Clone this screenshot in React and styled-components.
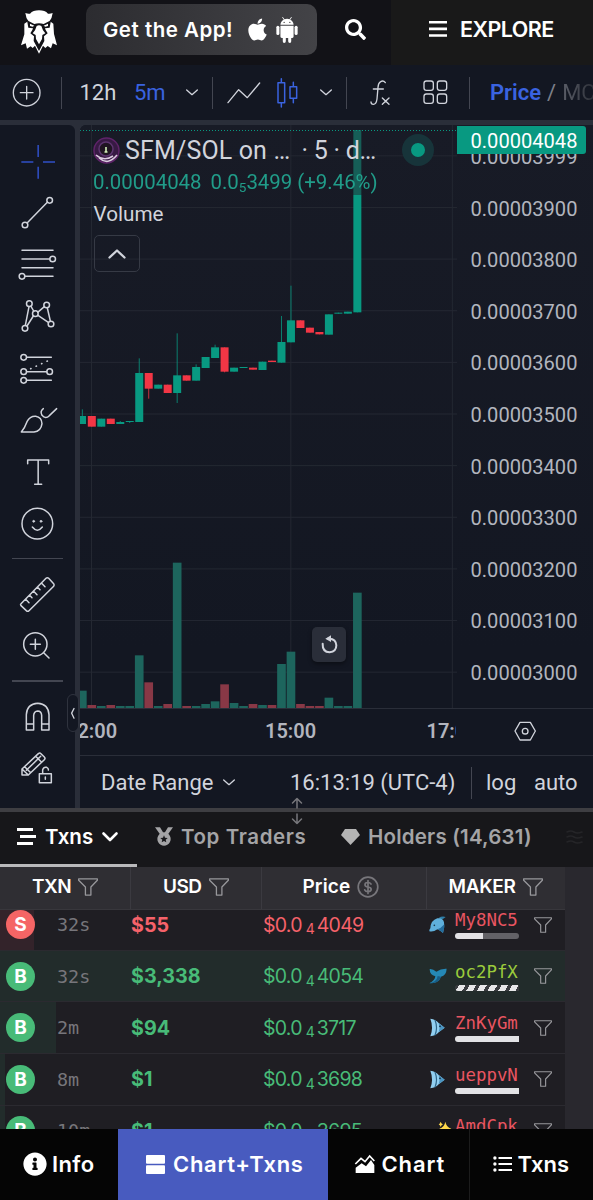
import React from 'react';
import styled, { createGlobalStyle } from 'styled-components';
import { FaApple, FaSearch, FaInfoCircle } from 'react-icons/fa';

const GlobalStyle = createGlobalStyle`
  * { box-sizing: border-box; }
  body { margin: 0; background: #121217; }
`;

const ui = 'Inter, "Open Sans", sans-serif';
const chartFont = 'Roboto, "Noto Sans", sans-serif';
const green = '#089981';
const red = '#f23645';

const Page = styled.div`
  width: 593px;
  height: 1200px;
  overflow: hidden;
  display: flex;
  flex-direction: column;
  font-family: ${ui};
  color: #fff;
  white-space: nowrap;
`;

const Svg = styled.svg`
  display: block;
  flex: none;
  overflow: visible;
`;

/* ---------- top bar ---------- */

const TopBar = styled.header`
  display: flex;
  height: 65px;
  flex: none;
  background: #121217;
`;

const Brand = styled.div`
  width: 86px;
  padding: 10px 0 0 21px;
`;

const AppButton = styled.div`
  display: flex;
  align-items: center;
  width: 231px;
  height: 51px;
  margin-top: 4px;
  padding-left: 17px;
  border-radius: 10px;
  background: linear-gradient(90deg, #2c2c30, #434347);
  font-size: 20.5px;
  font-weight: 600;
  letter-spacing: 0.5px;

  span { width: 142px; }
`;

const SearchBox = styled.div`
  display: flex;
  width: 74px;
  padding: 19px 0 0 28px;
`;

const Explore = styled.div`
  display: flex;
  flex: 1;
  align-items: center;
  gap: 13px;
  padding: 0 0 7px 38px;
  background: #191919;
  font-size: 21.5px;
  font-weight: 600;
  letter-spacing: -0.55px;
`;

/* ---------- chart toolbar ---------- */

const ToolBar = styled.div`
  display: flex;
  align-items: center;
  height: 55px;
  flex: none;
  background: #131722;
  font-family: ${chartFont};
  font-size: 22px;
  color: #d1d4dc;
`;

const BarItem = styled.div`
  width: ${(p) => p.$w}px;
  flex: none;
  padding-left: ${(p) => p.$pl || 0}px;
  color: ${(p) => p.$color || 'inherit'};
`;

const Rule = styled.div`
  width: 1px;
  height: 32px;
  flex: none;
  background: #434651;
`;

const PriceSwitch = styled.div`
  display: flex;
  gap: 6px;
  margin-left: 20px;
  overflow: hidden;
  color: #7d808a;

  b { color: #3a63e0; font-weight: 600; }
  span { background: linear-gradient(90deg, #5b5e68, #24272f 38px); background-clip: text; color: transparent; }
`;

/* ---------- chart ---------- */

const ChartArea = styled.section`
  display: flex;
  gap: 5px;
  height: 688px;
  padding-top: 5px;
  flex: none;
  background: #2a2e39;
`;

const DrawRail = styled.div`
  position: relative;
  width: 75px;
  flex: none;
  padding-top: 10px;
  border-top-right-radius: 6px;
  background: #131722;
`;

const RailTool = styled.div`
  display: flex;
  align-items: center;
  height: 51.7px;
  padding-left: 18.3px;
`;

const RailRule = styled.div`
  height: 19.5px;
  padding: 9px 12px 0;

  &::after { content: ''; display: block; height: 1.5px; background: #434651; }
`;

const RailHandle = styled.div`
  position: absolute;
  left: 67px;
  top: 569px;
  z-index: 3;
  display: flex;
  align-items: center;
  justify-content: center;
  width: 12px;
  height: 38px;
  border: 1px solid #2f333e;
  border-radius: 6px;
  background: #131722;
`;

const ChartPane = styled.div`
  flex: 1;
  border-top-left-radius: 6px;
  overflow: hidden;
  background: #131722;
`;

const PlotRow = styled.div`
  display: flex;
  height: 584px;
  border-bottom: 1px solid #2a2e39;
  background: linear-gradient(#181b26, #131722 90%);
`;

const Plot = styled.div`
  position: relative;
  width: 377px;
  height: 583px;
  flex: none;
`;

const Legend = styled.div`
  position: absolute;
  left: 13px;
  top: 9px;
  width: 350px;
  font-family: ${chartFont};
  color: #d1d4dc;
`;

const Pair = styled.div`
  display: flex;
  align-items: center;
  height: 32px;
  font-size: 25px;

  svg { margin-right: 5px; }
`;

const PairName = styled.span`
  width: ${(p) => p.$w}px;
  letter-spacing: ${(p) => p.$ls || 0}px;
`;

const Change = styled.div`
  display: flex;
  height: 32px;
  align-items: center;
  font-size: 20.4px;
  color: #22ab94;
  opacity: 0.9;

  span { width: 117.5px; }
  small { font-size: 13.5px; line-height: 1; margin-top: 11px; }
`;

const VolumeLabel = styled.div`
  height: 32px;
  line-height: 32px;
  padding-left: 0.5px;
  font-size: 20.7px;
`;

const Collapse = styled.div`
  display: flex;
  align-items: center;
  justify-content: center;
  width: 46px;
  height: 37px;
  margin: 5px 0 0 1px;
  border: 1px solid #363a45;
  border-radius: 5px;
`;

const LiveDot = styled.div`
  position: absolute;
  left: 322px;
  top: 9px;
  width: 32px;
  height: 32px;
  border: 9px solid #17343a;
  border-radius: 50%;
  background: ${green};
`;

const ResetButton = styled.div`
  position: absolute;
  left: 232px;
  top: 502px;
  display: flex;
  align-items: center;
  justify-content: center;
  width: 34px;
  height: 35px;
  border-radius: 5px;
  background: #2a2e39;
  box-shadow: 0 2px 4px rgba(0, 0, 0, 0.4);
`;

const PriceAxis = styled.div`
  position: relative;
  flex: 1;
  padding-top: 7px;
  font-family: ${chartFont};
  font-size: 20.1px;
  color: #b2b5be;
`;

const AxisPrice = styled.div`
  height: 51.6px;
  line-height: 51.6px;
  padding-left: 13.5px;
`;

const LastPrice = styled.div`
  position: absolute;
  left: 0;
  top: 1px;
  width: 129px;
  height: 28px;
  padding-left: 13.5px;
  border-radius: 0 3px 3px 0;
  line-height: 30px;
  background: ${green};
  color: #fff;
`;

const TimeAxis = styled.div`
  display: flex;
  height: 47px;
  border-bottom: 1px solid #2a2e39;
  font-family: ${chartFont};
  font-size: 20px;
  font-weight: 600;
  line-height: 44px;
  color: #b2b5be;
`;

const TimeLabels = styled.div`
  display: flex;
  width: 376px;
  flex: none;
  overflow: hidden;
`;

const TimeLabel = styled.span`
  width: ${(p) => p.$w}px;
  margin-left: ${(p) => p.$ml || 0}px;
  flex: none;
`;

const AxisSettings = styled.div`
  padding: 12px 0 0 58px;
`;

const RangeBar = styled.div`
  display: flex;
  align-items: center;
  height: 53px;
  padding-left: 21px;
  font-family: ${chartFont};
  font-size: 22px;
  color: #d1d4dc;
`;

const Splitter = styled.div`
  position: relative;
  height: 4px;
  flex: none;
  background: #3e3e42;
`;

const SplitArrows = styled.div`
  position: absolute;
  left: 290.5px;
  top: -11.5px;
  z-index: 4;
`;

/* ---------- transactions ---------- */

const Tabs = styled.nav`
  display: flex;
  height: 55px;
  flex: none;
  background: #17171a;
  font-size: 20.5px;
  font-weight: 600;
  color: #a4a4a6;
`;

const Tab = styled.div`
  display: flex;
  align-items: center;
  gap: ${(p) => p.$gap}px;
  width: ${(p) => p.$w}px;
  flex: none;
  padding: 0 0 ${(p) => (p.$active ? 3 : 6)}px ${(p) => p.$pl}px;
  border-bottom: ${(p) => (p.$active ? '3px solid #b9b9bb' : '0')};
  color: ${(p) => (p.$active ? '#fff' : 'inherit')};
  letter-spacing: ${(p) => p.$ls || 0}px;
`;

const TableArea = styled.div`
  height: 262px;
  flex: none;
  overflow: hidden;
  background: #29282e;
`;

const TableHead = styled.div`
  position: relative;
  z-index: 1;
  display: flex;
  width: 564.5px;
  height: 42.5px;
  background: #2f2e33;
  border-bottom: 1px solid #38373c;
  font-size: 19px;
  font-weight: 600;
`;

const HeadCell = styled.div`
  display: flex;
  align-items: center;
  gap: 7px;
  width: ${(p) => p.$w}px;
  padding: 0 0 2px ${(p) => p.$pl}px;
  border-right: ${(p) => (p.$last ? '0' : '1px solid #3b3a40')};
  letter-spacing: ${(p) => p.$ls || 0}px;
`;

const Rows = styled.div`
  width: 564.5px;
  margin-top: -10.3px;
`;

const Row = styled.div`
  display: flex;
  align-items: center;
  height: 51.6px;
  padding-left: 6px;
  border-bottom: 1px solid #2b2a30;
  background: linear-gradient(90deg, ${(p) => (p.$side === 'S' ? '#33232a' : '#222c2b')} ${(p) => p.$fill}px, #1f1e23 ${(p) => p.$fill}px);
  color: ${(p) => (p.$side === 'S' ? '#f6626a' : '#48bb78')};
`;

const Side = styled.div`
  display: flex;
  align-items: center;
  justify-content: center;
  width: 29px;
  height: 29px;
  border-radius: 50%;
  background: ${(p) => (p.$side === 'S' ? '#f56565' : '#48bb78')};
  color: #fff;
  font-size: 19px;
  font-weight: 700;
`;

const Age = styled.div`
  width: 96px;
  padding-left: 22px;
  font-family: "DejaVu Sans Mono", monospace;
  font-size: 18.4px;
  color: #77767b;
`;

const Usd = styled.div`
  width: 132px;
  font-size: 19.7px;
  font-weight: 700;
`;

const Price = styled.div`
  display: flex;
  align-items: center;
  width: 166px;
  font-size: 19.5px;
  letter-spacing: -0.75px;

  small { width: 15px; padding: 9px 0 0 4px; font-size: 14px; line-height: 1; }
`;

const Creature = styled.div`
  width: 26px;
  flex: none;
`;

const Maker = styled.div`
  width: 79px;
  flex: none;
`;

const MakerName = styled.div`
  height: 23px;
  line-height: 21px;
  font-family: "DejaVu Sans Mono", monospace;
  font-size: 17.4px;
  color: ${(p) => (p.$lime ? '#9bcb3c' : '#e95561')};
`;

const Hold = styled.div`
  width: 63.5px;
  height: 6px;
  background: ${(p) =>
    p.$kind === 'striped'
      ? 'repeating-linear-gradient(120deg, #3a3c40 0 3.5px, #e8e8ea 3.5px 9.2px)'
      : `linear-gradient(90deg, #e2e2e5 ${p.$kind === 'half' ? 28 : 64}px, #636267 0)`};
  border-radius: ${(p) => (p.$kind === 'half' ? '3px' : '3px 0 0 3px')};
`;

/* ---------- bottom navigation ---------- */

const BottomNav = styled.nav`
  position: relative;
  z-index: 2;
  display: flex;
  flex: 1;
  background: #050505;
  font-size: 22px;
  font-weight: 600;
`;

const NavItem = styled.div`
  display: flex;
  align-items: center;
  gap: ${(p) => p.$gap}px;
  width: ${(p) => p.$w}px;
  flex: none;
  padding: 0 0 1px ${(p) => p.$pl}px;
  background: ${(p) => (p.$active ? '#485bbf' : 'transparent')};
  border-right: ${(p) => (p.$line ? '1px solid #1c1c1c' : '0')};
  letter-spacing: ${(p) => p.$ls || 0}px;
`;

/* ---------- icons ---------- */

const Eagle = () => (
  <Svg width="36" height="44" viewBox="64 31 108 132">
    <path fill="#fff" d="M77 40 Q84 43 91 42 Q100 32 118 32 Q136 32 145 42 Q152 43 159 40 Q157 56 150 64 L161 72 L163 103 L172 137 L159 131 L154 146 L144 139 L137 145 L130 138 L118 162 L106 138 L99 145 L93 140 L82 147 L78 131 L64 137 L74 104 L74 72 L86 64 Q79 56 77 40Z" />
    <path fill="#121217" d="M82 62 L104 73 Q118 68 132 73 L154 62 L150 84 L136 86 L138 91 L144 101 L133 110 L134 124 L118 154 L102 124 L103 110 L92 101 L98 91 L100 86 L86 84Z" />
    <path fill="#fff" d="M91 72 L104 78 L99 81 L91 79Z M145 72 L132 78 L137 81 L145 79Z M111 79 Q118 75 125 79 L130 92 L137 101 L128 106 L127 118 L118 134 L109 118 L108 106 L99 101 L106 92Z" />
  </Svg>
);

const Android = () => (
  <Svg width="22" height="26" viewBox="828 50 65 77" fill="#fff">
    <path d="M841 73 Q842 62 851 58 L846 51 L848 50 L853 57 Q861 54 868 57 L873 50 L875 51 L870 58 Q879 62 880 73Z" />
    <path d="M841 76 H880 V108 Q880 112 876 112 H873 V122 Q873 127 869 127 Q864 127 864 122 V112 H857 V122 Q857 127 852 127 Q848 127 848 122 V112 H845 Q841 112 841 108Z" />
    <rect x="829" y="76" width="9" height="27" rx="4.5" />
    <rect x="883" y="76" width="9" height="27" rx="4.5" />
    <circle cx="852" cy="66" r="1.8" fill="#333" />
    <circle cx="869" cy="66" r="1.8" fill="#333" />
  </Svg>
);

const Line = ({ w, h, box, d, color = '#d1d4dc', sw = 4, children }) => (
  <Svg width={w} height={h} viewBox={box} fill="none" stroke={color} strokeWidth={sw} strokeLinecap="round" strokeLinejoin="round">
    <path d={d} />
    {children}
  </Svg>
);

const Caret = () => <Line w={12} h={7} box="558 268 36 21" d="M560 271 L576 285 L592 271" />;

const Funnel = ({ w = 20, h = 18 }) => (
  <Line w={w} h={h} box="229 233 62 54" color="#98989c" sw={4} d="M231 235 H289 V239 L269 260 V285 H252 V260 L231 239Z" />
);

const Rail = ({ box, d, color, children, butt }) => (
  <RailTool>
    <Svg width="40" height="40" viewBox={`55 ${box} 120 120`} fill="none" stroke={color || '#d1d4dc'} strokeWidth="4.5" strokeLinejoin="round" strokeLinecap={butt ? 'butt' : 'round'}>
      <path d={d} />
      {children}
    </Svg>
  </RailTool>
);

const rings = (list, r = 8.5) => list.map(([x, y]) => <circle key={`${x}-${y}`} cx={x} cy={y} r={r} />);

const Dolphin = () => (
  <Svg width="17" height="18" viewBox="412 47 51 54">
    <path fill="#2f7fa8" d="M441 53 Q451 46 462 50 Q456 57 446 58Z" />
    <path fill="#5fb0dc" d="M413 93 Q412 89 416 84 Q417 60 437 54 Q454 52 457 66 Q460 80 454 98 Q446 90 437 87 Q425 96 413 93Z" />
    <path fill="#246d9d" d="M437 87 Q446 90 454 98 Q458 88 458 72 Q448 84 437 87Z" />
    <circle cx="428" cy="75" r="2.5" fill="#18374c" />
  </Svg>
);

const Whale = () => (
  <Svg width="18" height="16" viewBox="410 205 54 48">
    <path fill="#2588b5" d="M412 208 Q422 207 432 216 Q446 206 463 207 Q462 227 446 231 Q440 251 411 251 Q428 242 429 230 Q412 226 412 208Z" />
    <path fill="#185d86" d="M446 231 Q440 251 411 251 Q434 246 436 229Z" />
  </Svg>
);

const Fish = () => (
  <Svg width="17" height="19" viewBox="413 355 51 57">
    <path fill="#91cff0" d="M417 357 Q434 359 442 370 L460 384 L442 398 Q434 408 417 410 Q427 383 417 357Z" />
    <path fill="none" stroke="#2d6487" strokeWidth="3.5" d="M431 361 Q440 384 431 407" />
    <path fill="#4b95c2" d="M442 370 L460 384 L442 398 Q447 384 442 370Z" />
    <circle cx="446" cy="380" r="2.8" fill="#17344a" />
  </Svg>
);

const Sparkles = () => (
  <Svg width="22" height="20" viewBox="413 643 66 60">
    <path fill="none" stroke="#38a169" strokeWidth="4" d="M416 690 Q418 676 426 678 Q434 679 434 690 M440 690 Q440 678 448 679" />
    <path fill="#ffd94a" d="M462 645 Q465 662 480 666 Q466 670 462 687 Q458 670 444 666 Q459 662 462 645Z M438 666 Q441 675 449 678 Q441 681 438 690 Q436 681 428 678 Q436 675 438 666Z M448 645 Q450 651 455 653 Q450 655 448 661 Q446 655 442 653 Q446 651 448 645Z" />
  </Svg>
);

/* ---------- chart data: [up, top, bottom, high, low, volume top] ---------- */

const candles = [
  [1, 888, 912, 868, 912, 452], [0, 888, 920, 888, 920, 495], [1, 896, 920, 896, 920, 498],
  [0, 896, 912, 896, 912, 495], [1, 906, 912, 903, 912, 498], [1, 903, 906, 903, 909, 498],
  [1, 759, 906, 715, 906, 346], [0, 759, 806, 759, 836, 427], [1, 794, 806, 794, 806, 498],
  [0, 794, 819, 794, 819, 492], [1, 766, 819, 640, 849, 68], [0, 766, 782, 766, 782, 498],
  [1, 741, 782, 733, 782, 498], [1, 711, 744, 711, 744, 492], [1, 682, 714, 674, 714, 484],
  [0, 682, 755, 682, 757, 433], [1, 743, 755, 743, 755, 489], [1, 741, 744, 741, 744, 498],
  [0, 743, 749, 743, 749, 492], [1, 725, 750, 725, 750, 495], [0, 722, 726, 722, 726, 495],
  [1, 666, 728, 588, 728, 372], [1, 601, 667, 497, 667, 335], [0, 601, 624, 601, 624, 492],
  [0, 623, 638, 623, 638, 498], [0, 636, 643, 636, 643, 498], [1, 583, 644, 583, 644, 473],
  [1, 578, 581, 578, 581, 498], [1, 575, 581, 575, 581, 498], [1, 225, 577, 225, 577, 158],
];

const CandleChart = () => (
  <Svg width="377" height="583" viewBox="0 15 1131 1749">
    <g stroke="#242832" strokeWidth="3">
      {Array.from({ length: 11 }, (_, i) => (
        <line key={i} x1="0" x2="1131" y1={107.5 + i * 154.9} y2={107.5 + i * 154.9} />
      ))}
      {[34.5, 632.5, 1117].map((x) => <line key={x} x1={x} x2={x} y1="15" y2="1764" />)}
    </g>
    {candles.map(([up, top, bottom, high, low, vol], i) => {
      const x = 7 + i * 28.45;
      const left = Math.max(0, x - 12);
      return (
        <g key={i}>
          <rect x={Math.max(0, x - 13)} y={vol + 1260} width={i ? 26 : 20} height={504 - vol} fill={up ? '#1d655d' : '#883846'} />
          <rect x={x - 1.5} y={high} width="3" height={low - high} fill={up ? green : red} opacity="0.8" />
          <rect x={left} y={top} width={i ? 24 : 18} height={bottom - top} fill={up ? green : red} />
        </g>
      );
    })}
    <rect x="820" y="30" width="24" height="195" fill="#165e57" />
    <line x1="0" x2="1131" y1="31.5" y2="31.5" stroke={green} strokeWidth="3" strokeDasharray="3 6" />
  </Svg>
);

const axisPrices = ['3999', '3900', '3800', '3700', '3600', '3500', '3400', '3300', '3200', '3100', '3000'];

const txns = [
  { side: 'S', age: '32s', usd: '$55', price: '4049', maker: 'My8NC5', kind: 'half', fill: 34, Animal: Dolphin },
  { side: 'B', age: '32s', usd: '$3,338', price: '4054', maker: 'oc2PfX', kind: 'striped', fill: 565, Animal: Whale },
  { side: 'B', age: '2m', usd: '$94', price: '3717', maker: 'ZnKyGm', kind: 'full', fill: 56.5, Animal: Fish },
  { side: 'B', age: '8m', usd: '$1', price: '3698', maker: 'ueppvN', kind: 'full', fill: 5.5, Animal: Fish },
  { side: 'B', age: '10m', usd: '$1', price: '3695', maker: 'AmdCpk', kind: 'full', fill: 5.5, Animal: Sparkles },
];

export default function App() {
  return (
    <Page>
      <GlobalStyle />
      <TopBar>
        <Brand><Eagle /></Brand>
        <AppButton>
          <span>Get the App!</span>
          <FaApple size={25} />
          <BarItem $w={29} $pl={6}><Android /></BarItem>
        </AppButton>
        <SearchBox><FaSearch size={21} /></SearchBox>
        <Explore>
          <Svg width="18" height="16" viewBox="0 0 18 16" fill="#fff">
            <path d="M0 0h18v2.6H0zM0 6.6h18v2.6H0zM0 13.2h18v2.6H0z" />
          </Svg>
          EXPLORE
        </Explore>
      </TopBar>

      <ToolBar>
        <BarItem $w={61} $pl={12}>
          <Line w={29} h={29} box="36 236 87 87" d="M61 280 H99 M80 261 V299"><circle cx="80" cy="280" r="40" /></Line>
        </BarItem>
        <Rule />
        <BarItem $w={72} $pl={17.5}>12h</BarItem>
        <BarItem $w={52}  $color="#3a63e0">5m</BarItem>
        <BarItem $w={26}><Caret /></BarItem>
        <Rule />
        <BarItem $w={63} $pl={14}>
          <Line w={34} h={22} box="681 245 102 66" d="M684 307 L716 268 L742 292 L779 248" />
        </BarItem>
        <BarItem $w={44} $pl={1}>
          <Line w={22} h={30} box="831 234 66 90" color="#3a63e0" sw={4.5} d="M844 236 V248 M844 308 V321 M834 248 H854 V308 H834Z M880 247 V260 M880 295 V308 M870 260 H890 V295 H870Z" />
        </BarItem>
        <BarItem $w={26}><Caret /></BarItem>
        <Rule />
        <BarItem $w={76} $pl={23}>
          <Line w={21} h={26} box="231 238 63 78" d="M277 246 Q271 238 263 243 Q256 247 255 260 L252 295 Q250 311 241 311 Q234 311 234 304 M241 265 H271 M268 292 L288 311 M288 292 L268 311" />
        </BarItem>
        <BarItem $w={46}>
          <Line w={25} h={25} box="390 241 75 75" d="">
            {[[393, 244], [433, 244], [393, 283], [433, 283]].map(([x, y]) => <rect key={`${x}${y}`} x={x} y={y} width="28" height="28" rx="7" />)}
          </Line>
        </BarItem>
        <Rule />
        <PriceSwitch><b>Price</b> / <span>MCap</span></PriceSwitch>
      </ToolBar>

      <ChartArea>
        <DrawRail>
          <Rail box={61} color="#3050c8" butt d="M65 124 H101 M130 124 H166 M115.500 73 V109 M115.500 138 V174" />
          <Rail box={218} d="M83 307 L143 246">{rings([[76, 314], [150, 240]])}</Rail>
          <Rail box={373} d="M67 392 H160 M67 418 H150 M67 444 H160 M77 470 H160">{rings([[159, 418], [67, 470]])}</Rail>
          <Rail box={528} d="M88 560 L77 616 M94 559 L102 573 M101 588 L82 618 M114 577 L134 560 M115 586 L146 607 M143 564 L152 603">{rings([[89, 551], [141, 555], [107, 581], [76, 625], [154, 612]])}</Rail>
          <Rail box={684} d="M81 712 H155 M81 755 H141 M81 781 H155">
            {rings([[72, 712], [72, 755], [150, 755], [72, 781]])}
            <path d="M93 746 L150 720" strokeDasharray="1 17" strokeWidth="5" />
          </Rail>
          <Rail box={838} d="M65 937 Q76 923 82 906 Q91 889 108 890 Q126 893 127 912 Q124 935 103 937Z M131 867 Q120 875 127 887 Q138 900 149 888 L171 867" />
          <Rail box={993} d="M84 1031 V1020 H147 V1031 M115.500 1020 V1093 M105 1093 H126" />
          <Rail box={1149} d="M98 1221 Q113 1240 128 1221">
            <circle cx="113" cy="1211" r="46" />
            <circle cx="102" cy="1204" r="3" fill="#d1d4dc" strokeWidth="2" />
            <circle cx="124" cy="1204" r="3" fill="#d1d4dc" strokeWidth="2" />
          </Rail>
          <RailRule />
          <Rail box={341} d="M64 430 L139 354 Q143 350 147 354 L162 370 Q165 374 162 378 L88 451 Q84 455 80 451 L64 436 Q61 433 64 430Z M78 417 L88 427 M90 405 L97 412 M102 393 L112 403 M114 381 L121 388 M126 369 L136 379" />
          <Rail box={496} d="M92 551 H122 M107 536 V566 M132 576 L148 592"><circle cx="107" cy="551" r="35" /></Rail>
          <RailRule />
          <Rail box={709} d="M80 808 V762 Q82 730 114 728 Q146 730 148 762 V808 H126 V764 Q125 751 114 751 Q103 752 102 764 V808Z M80 790 H102 M126 790 H148" />
          <Rail box={863} d="M67 944 V926 L116 880 Q120 876 124 880 L134 890 Q138 894 134 898 L86 944Z M67 926 L86 944 M75 919 L93 937 M80 930 L123 888 M108 888 L126 906 M119 940 H155 V967 H119Z M129 940 V928 Q132 919 141 921 Q147 924 146 929 M137 950 V957" />
          <RailHandle><Line w={4} h={11} box="214 745 12 32" sw={4} d="M223 746 L216 760 L223 775" /></RailHandle>
        </DrawRail>

        <ChartPane>
          <PlotRow>
            <Plot>
              <CandleChart />
              <Legend>
                <Pair>
                  <Svg width="27" height="27" viewBox="0 0 27 27">
                    <circle cx="13.500" cy="13.500" r="12.500" fill="#371a43" stroke="#5f2369" strokeWidth="1.500" />
                    <circle cx="13" cy="12" r="7" fill="#201522" stroke="#5d3570" strokeWidth="1.500" />
                    <path d="M3 18 Q11 25 20 19 M6 21 Q15 29 24 18" fill="none" stroke="#dac9df" strokeWidth="1.600" />
                    <path d="M13 10 V15 M11.500 15 H14.500" stroke="#d4f1ba" strokeWidth="1.600" />
                  </Svg>
                  <PairName $w={176.5} $ls={0.15}>SFM/SOL on …</PairName>
                  <PairName $ls={-0.25}>· 5 · d…</PairName>
                </Pair>
                <Change><span>0.00004048</span>0.0<small>5</small>3499 (+9.46%)</Change>
                <VolumeLabel>Volume</VolumeLabel>
                <Collapse><Line w={18} h={10} box="0 0 18 10" sw={2.3} d="M1.500 8.500 L9 1.500 L16.500 8.500" /></Collapse>
              </Legend>
              <LiveDot />
              <ResetButton>
                <Line w={17} h={18} box="722 290 51 54" sw={6} d="M727 313 Q726 338 748 339 Q768 337 768 318 Q767 299 747 298 H742"><path fill="#d1d4dc" stroke="none" d="M735 298 L752 288 V308Z" /></Line>
              </ResetButton>
            </Plot>
            <PriceAxis>
              {axisPrices.map((p) => <AxisPrice key={p}>0.0000{p}</AxisPrice>)}
              <LastPrice>0.00004048</LastPrice>
            </PriceAxis>
          </PlotRow>
          <TimeAxis>
            <TimeLabels>
              <TimeLabel $w={199} $ml={-14}>12:00</TimeLabel>
              <TimeLabel $w={161.5}>15:00</TimeLabel>
              <TimeLabel $w={60}>17:00</TimeLabel>
            </TimeLabels>
            <AxisSettings>
              <Line w={23} h={22} box="664 95 69 66" d="M682 99 H713 L728 125 L713 152 H682 L667 125Z"><circle cx="697.500" cy="125.500" r="8.500" /></Line>
            </AxisSettings>
          </TimeAxis>
          <RangeBar>
            <BarItem $w={122}>Date Range</BarItem>
            <BarItem $w={67}><Caret /></BarItem>
            <BarItem $w={181}>16:13:19 (UTC-4)</BarItem>
            <Rule />
            <BarItem $w={62} $pl={14}>log</BarItem>
            <BarItem $w={45}>auto</BarItem>
          </RangeBar>
        </ChartPane>
      </ChartArea>

      <Splitter>
        <SplitArrows>
          <Line w={12} h={28} box="0 0 12 28" color="#77777c" sw={1.5} d="M6 11 V1.500 M1.500 6 L6 1.500 L10.500 6 M6 17 V26.500 M1.500 22 L6 26.500 L10.500 22" />
        </SplitArrows>
      </Splitter>

      <Tabs>
        <Tab $active $w={137} $pl={17} $gap={9}>
          <Svg width="19" height="17" viewBox="0 0 19 17" fill="#fff"><path d="M0 0h16v3H0zM3 7h16v3H3zM0 14h16v3H0z" /></Svg>
          Txns
          <Line w={16} h={10} box="0 0 16 10" color="#fff" sw={2.6} d="M1.500 1.500 L8 8 L14.500 1.500" />
        </Tab>
        <Tab $w={204} $pl={17.5} $gap={8.5} $ls={0.6}>
          <Svg width="18" height="19" viewBox="464 83 54 57" fill="#a4a4a6">
            <path d="M464 84 H479 L489 100 L480 106Z M518 84 H503 L493 100 L502 106Z" />
            <path fillRule="evenodd" d="M491 99 A20 20 0 1 0 491.100 99Z M491 108 L494 115 L502 116 L496 121 L498 129 L491 125 L484 129 L486 121 L480 116 L488 115Z" />
          </Svg>
          Top Traders
        </Tab>
        <Tab $w={225} $pl={0} $gap={8} $ls={0.2}>
          <Svg width="19" height="16" viewBox="0 0 19 16" fill="#b4b4b4"><path d="M4 0 H15 L19 6 L9.500 16 L0 6Z" /></Svg>
          Holders (14,631)
        </Tab>
        <Tab $w={20} $pl={0} $gap={0}>
          <Line w={17} h={14} box="0 0 17 14" color="#252528" sw={1.6} d="M1 2 Q5 0 8 2 T16 2 M1 7 Q5 5 8 7 T16 7 M1 12 Q5 10 8 12 T16 12" />
        </Tab>
      </Tabs>

      <TableArea>
        <TableHead>
          <HeadCell $w={131} $pl={32} $ls={-0.5}>TXN <Funnel /></HeadCell>
          <HeadCell $w={131} $pl={32} $ls={-0.5}>USD <Funnel /></HeadCell>
          <HeadCell $w={164.5} $pl={40.5} $ls={0.1}>
            Price
            <Line w={22} h={22} box="0 0 22 22" color="#77767b" sw={1.7} d="M14 8 Q13 6.500 11 6.500 Q8 6.500 8 8.700 Q8 10.500 11 11 Q14.200 11.500 14.200 13.400 Q14 15.600 11 15.600 Q8.500 15.600 7.700 13.800 M11 4.500 V17.500"><circle cx="11" cy="11" r="9.800" /></Line>
          </HeadCell>
          <HeadCell $w={138} $pl={22} $last $ls={-0.3}>MAKER <Funnel /></HeadCell>
        </TableHead>
        <Rows>
          {txns.map(({ side, age, usd, price, maker, kind, fill, Animal }) => (
            <Row key={maker} $side={side} $fill={fill}>
              <Side $side={side}>{side}</Side>
              <Age>{age}</Age>
              <Usd>{usd}</Usd>
              <Price>$0.0<small>4</small>{price}</Price>
              <Creature><Animal /></Creature>
              <Maker>
                <MakerName $lime={kind === 'striped'}>{maker}</MakerName>
                <Hold $kind={kind} />
              </Maker>
              <Funnel w={18} h={16} />
            </Row>
          ))}
        </Rows>
      </TableArea>

      <BottomNav>
        <NavItem $w={118} $pl={23} $gap={5} $ls={0.4}><FaInfoCircle size={24} />Info</NavItem>
        <NavItem $w={210} $pl={28} $gap={8} $active $ls={0.7}>
          <Svg width="19" height="19" viewBox="0 0 19 19" fill="#fff"><rect width="19" height="8.700" rx="1" /><rect y="10.300" width="19" height="8.700" rx="1" /></Svg>
          Chart+Txns
        </NavItem>
        <NavItem $w={142} $pl={26.5} $gap={7} $line $ls={0.9}>
          <Svg width="20" height="18" viewBox="185 765 60 54" fill="#fff">
            <path d="M187 819 V803 L205 790 L218 799 L233 780 L243 795 V819Z" />
            <path fill="none" stroke="#fff" strokeWidth="5" d="M186 792 L203 775 L215 785 L229 768 L243 783" />
          </Svg>
          Chart
        </NavItem>
        <NavItem $w={123} $pl={23} $gap={5.5}>
          <Svg width="19" height="16" viewBox="0 0 19 16" fill="#fff">
            <path d="M5.500 1h13.500v2H5.500zM5.500 7h13.500v2H5.500zM5.500 13h13.500v2H5.500z" />
            <circle cx="1.900" cy="2" r="1.700" /><circle cx="1.900" cy="8" r="1.700" /><circle cx="1.900" cy="14" r="1.700" />
          </Svg>
          Txns
        </NavItem>
      </BottomNav>
    </Page>
  );
}
